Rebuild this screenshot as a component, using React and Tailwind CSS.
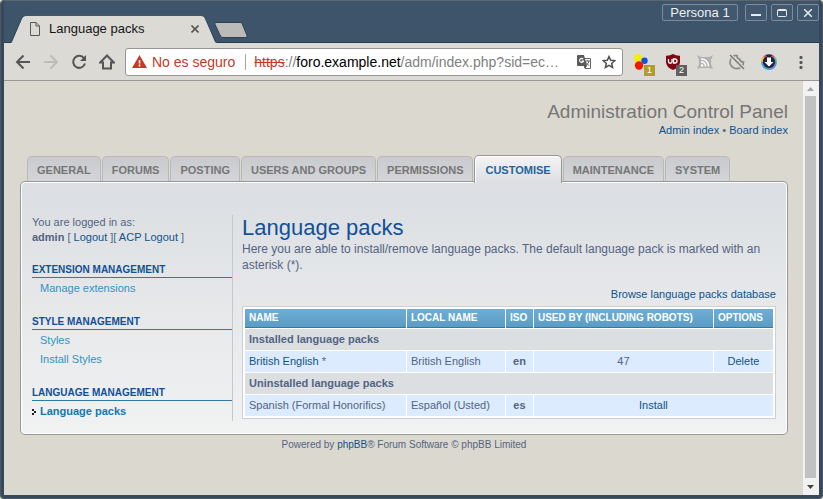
import React from "react";

const navTabs = [
  "General",
  "Forums",
  "Posting",
  "Users and groups",
  "Permissions",
  "Customise",
  "Maintenance",
  "System",
];

const menuGroups = [
  { title: "Extension management", items: ["Manage extensions"] },
  { title: "Style management", items: ["Styles", "Install Styles"] },
  { title: "Language management", items: ["Language packs"] },
];

function WindowButton({ label, children }) {
  return (
    <button
      type="button"
      aria-label={label}
      className="flex h-[17px] w-[22px] items-center justify-center rounded-[2px] border border-[#7b8c9c] bg-[#41586e]"
    >
      {children}
    </button>
  );
}

function TitleBar() {
  return (
    <div className="flex h-[43px] shrink-0 justify-between border-y border-b-[#263c50] border-t-[#5b6670] bg-[#3d546b] pl-[7px]">
      <div className="flex items-end">
        <div className="relative -mb-px flex h-7 w-[206px] items-center pl-[19px] pr-[18px]">
          <svg className="absolute inset-0 h-7 w-[206px]" viewBox="0 0 206 28" aria-hidden="true">
            <path d="M0 28 L1 27 L11 3 Q12.500 .5 15 .5 L190 .5 Q193 .5 194 3 L204 27 L206 28Z" fill="#dbdad5" />
            <path d="M0 27.500 L11 3 Q12.500 .5 15 .5 L190 .5 Q193 .5 194 3 L205 27.500" fill="none" stroke="#2c4258" strokeWidth="1" opacity=".75" />
          </svg>
          <svg className="relative h-[14px] w-[10px]" viewBox="0 0 10 14" fill="none" stroke="#5a5a5a" aria-hidden="true">
            <path d="M.5 .5h5.500l3.500 3.500v9.500H.5z M6 .5v3.500h3.500" />
          </svg>
          <span className="relative ml-[9px] grow text-[13px] leading-4 text-[#141414]">Language packs</span>
          <button type="button" aria-label="Close tab" className="relative">
            <svg className="h-2 w-2" viewBox="0 0 8 8" stroke="#555" strokeWidth="1.600">
              <path d="M.5 .5l7 7M7.500 .5l-7 7" />
            </svg>
          </button>
        </div>
        <button type="button" aria-label="New tab" className="mb-1 -ml-[3px]">
          <svg className="h-4 w-[34px]" viewBox="0 0 34 16">
            <path d="M2 .5h24q1.500 0 2 1l5 12q.5 2-1.500 2H9q-2 0-2.500-1.500L.8 2Q.5 .5 2 .5z" fill="#bdbbb7" stroke="#2c4258" />
          </svg>
        </button>
      </div>
      <div className="flex gap-1 pt-[3px]">
        <button
          type="button"
          className="mr-[3px] h-[17px] w-[76px] rounded-[2px] border border-[#7b8c9c] bg-[#41586e] text-[13px] leading-[14px] text-[#f0f0f0]"
        >
          Persona 1
        </button>
        <WindowButton label="Minimise">
          <svg className="h-2 w-[10px]" viewBox="0 0 10 8"><path d="M0 6h10" stroke="#e6ebef" strokeWidth="2" /></svg>
        </WindowButton>
        <WindowButton label="Maximise">
          <svg className="h-2 w-[10px]" viewBox="0 0 10 8" fill="none" stroke="#e6ebef">
            <rect x=".5" y=".5" width="9" height="7" rx="1" /><path d="M1 1.500h8" />
          </svg>
        </WindowButton>
        <WindowButton label="Close window">
          <svg className="h-2 w-2" viewBox="0 0 8 8" stroke="#e6ebef" strokeWidth="1.500">
            <path d="M0 0l8 8M8 0l-8 8" />
          </svg>
        </WindowButton>
      </div>
    </div>
  );
}

function NavButton({ label, color, children }) {
  return (
    <button type="button" aria-label={label} className="flex w-7 justify-center">
      <svg className="h-4 w-4" viewBox="0 0 16 16" fill="none" stroke={color} strokeWidth="2">
        {children}
      </svg>
    </button>
  );
}

function Extension({ label, badge, badgeClass, children }) {
  return (
    <button type="button" aria-label={label} className="relative flex w-8 justify-center">
      <svg className="h-4 w-4" viewBox="0 0 16 16">{children}</svg>
      {badge && (
        <span className={"absolute left-[19px] top-[11px] h-[11px] w-[11px] text-center text-[9px] leading-[11px] text-white " + badgeClass}>
          {badge}
        </span>
      )}
    </button>
  );
}

function Toolbar() {
  return (
    <div className="flex h-[38px] shrink-0 items-center border-b border-[#979692] bg-[#dbdad5] pl-[5px]">
      <NavButton label="Back" color="#555555"><path d="M15 8H2M8.500 1.500L2 8l6.500 6.500" /></NavButton>
      <NavButton label="Forward" color="#bdbcb8"><path d="M1 8h13M7.500 1.500L14 8l-6.500 6.500" /></NavButton>
      <NavButton label="Reload" color="#555555">
        <path d="M13 4.200A6 6 0 1 0 14 9.500" /><path d="M15 1v6H9z" fill="#555" stroke="none" />
      </NavButton>
      <NavButton label="Home" color="#555555"><path d="M8 1.500L1.200 8.500H4V14.500h8V8.500h2.800z" /></NavButton>

      <div className="ml-1 flex h-7 min-w-0 grow items-center rounded-[3px] border border-[#979692] bg-white pl-[6px] pr-[6px]">
        <button type="button" className="flex shrink-0 items-center whitespace-nowrap text-[14px] leading-4 text-[#c53929]">
          <svg className="mr-[5px] h-[13px] w-[15px]" viewBox="0 0 15 13" aria-hidden="true">
            <path d="M7.500 0L15 13H0z" fill="#c53929" /><path d="M7.500 5v3.500M7.500 9.500v2" stroke="#fff" strokeWidth="1.600" />
          </svg>
          No es seguro
        </button>
        <span className="ml-[10px] mr-2 h-4 w-px shrink-0 bg-[#a5a5a5]" />
        <div
          role="textbox"
          aria-label="Address"
          tabIndex={0}
          className="min-w-0 grow whitespace-nowrap text-[14px] leading-4 text-[#808080]"
        >
          <span className="text-[#c53929] line-through">https</span>://<span className="text-black">foro.example.net</span>/adm/index.php?sid=ec…
        </div>
        <button type="button" aria-label="Translate this page" className="shrink-0">
          <svg className="h-[14px] w-[14px]" viewBox="0 0 14 14">
            <path d="M5 3.500h8.500v10H8z" fill="#fff" stroke="#666" />
            <path d="M0 1q0-1 1-1h6l3 11H1q-1 0-1-1z" fill="#5a5a5a" />
            <path d="M6.200 4.200A2 2 0 1 0 6.500 6H4.500" fill="none" stroke="#fff" strokeWidth="1.100" />
            <path d="M8.500 6H13M10.800 5v1M12 6q-.5 3-3 4.500M9.200 7.500q1 2 3 3" fill="none" stroke="#666" />
            <path d="M7.500 11l2.500 0-2 2.500z" fill="#444" />
          </svg>
        </button>
        <button type="button" aria-label="Bookmark this page" className="ml-[11px] shrink-0">
          <svg className="h-[14px] w-[14px]" viewBox="0 0 14 14" fill="none" stroke="#505050" strokeWidth="1.500">
            <path d="M7 1.500L8.700 5.200 12.800 5.600 9.700 8.400 10.600 12.500 7 10.400 3.400 12.500 4.300 8.400 1.200 5.600 5.300 5.200z" />
          </svg>
        </button>
      </div>

      <div className="flex shrink-0 items-center px-[2px]">
        <Extension label="Coloured dots extension" badge="1" badgeClass="bg-[#b39b2d]">
          <circle cx="5" cy="4" r="4" fill="#f5ee00" /><circle cx="11.500" cy="6.800" r="3.200" fill="#1450dc" /><circle cx="6" cy="11.500" r="4.200" fill="#f01800" />
        </Extension>
        <Extension label="Content blocker" badge="2" badgeClass="bg-[#606060]">
          <path d="M8 0q3 2 7 1.800V8q0 5-7 8Q1 13 1 8V1.800Q5 2 8 0z" fill="#800610" />
          <path d="M3.500 5v2.500a1.500 1.500 0 0 0 3.500 0V5M8.500 5v4h1.500a2 2 0 0 0 0-4z" fill="none" stroke="#fff" strokeWidth="1.300" />
        </Extension>
        <Extension label="Feed reader">
          <path d="M0 1l4 2h8l4-2-2 5v4l2 5-4-1H4l-4 1 2-5V6z" fill="#b2b2af" />
          <circle cx="5" cy="11.500" r="1.300" fill="#fff" />
          <path d="M4 8a4 4 0 0 1 4.500 4.500M4 5a7 7 0 0 1 7.500 7.500" fill="none" stroke="#f8f8f8" strokeWidth="1.700" />
        </Extension>
        <Extension label="Blocked cookies">
          <path d="M3 3.500Q5 1 8 1.500Q8 5 10.500 5Q11 8 14.500 8Q14.500 11 12.500 13Q9 15.500 5 14Q1 12 1 8Q1 5.500 3 3.500z" fill="none" stroke="#8b8b88" strokeWidth="1.700" />
          <path d="M1 1l14 14" stroke="#dbdad5" strokeWidth="3.500" /><path d="M1 1l14 14" stroke="#777" strokeWidth="1.400" />
        </Extension>
        <Extension label="Downloads">
          <path d="M3.100 2.400A7 7 0 0 0 1 8" fill="none" stroke="#f2c03c" strokeWidth="2" />
          <path d="M1 8a7 7 0 0 0 7 7" fill="none" stroke="#39a9e8" strokeWidth="2" />
          <path d="M8 15a7 7 0 0 0 7-7" fill="none" stroke="#6c8be0" strokeWidth="2" />
          <path d="M15 8a7 7 0 0 0-2-5" fill="none" stroke="#4fd08a" strokeWidth="2" />
          <path d="M3 3a7 7 0 0 1 2-1.300M11 1.700a7 7 0 0 1 2 1.300" fill="none" stroke="#ef3f94" strokeWidth="2" />
          <circle cx="8" cy="8" r="6.200" fill="#25253a" />
          <path d="M8 1V.5M5 1.500q3-1 6 0" stroke="#25253a" strokeWidth="1.500" />
          <path d="M6 3.500h4V8h2.500L8 12.500 3.500 8H6z" fill="#fff" />
        </Extension>
        <button type="button" aria-label="Browser menu" className="flex w-8 justify-center">
          <svg className="h-4 w-4" viewBox="0 0 16 16" fill="#555">
            <rect x="6.500" y="2" width="3" height="3" rx="1" /><rect x="6.500" y="7" width="3" height="3" rx="1" /><rect x="6.500" y="12" width="3" height="3" rx="1" />
          </svg>
        </button>
      </div>
    </div>
  );
}

function AdminTabs() {
  return (
    <nav aria-label="Administration sections" className="relative flex items-end gap-px pl-[7px]">
      {navTabs.map((name) => {
        const active = name === "Customise";
        return (
          <a
            key={name}
            href="#"
            aria-current={active ? "page" : undefined}
            className={
              active
                ? "-mb-[2px] h-7 rounded-t-[5px] border border-b-0 border-[#979797] bg-linear-to-b from-[#f4f4f5] to-[#dcdee2] px-[10px] pt-[6px] text-[11px] font-bold uppercase leading-4 text-[#23649f] shadow-[inset_1px_1px_0_#ffffff]"
                : "h-[25px] rounded-t-[5px] border border-b-0 border-[#b9b9b7] bg-linear-to-b from-[#c9cace] to-[#d4d5d9] px-[9px] pt-[5px] text-[11px] font-bold uppercase leading-4 text-[#767676]"
            }
          >
            {name}
          </a>
        );
      })}
    </nav>
  );
}

function Sidebar() {
  return (
    <aside className="w-[201px] shrink-0 border-r border-[#c4c9cd] text-[11px]">
      <p className="leading-[15px] text-[#536482]">
        You are logged in as:
        <br />
        <strong>admin</strong> [ <a href="#" className="text-[#105289]">Logout</a> ][ <a href="#" className="text-[#105289]">ACP Logout</a> ]
      </p>
      <div className="flex flex-col gap-4 pt-[17px]">
        {menuGroups.map((group) => (
          <section key={group.title}>
            <h2 className="h-4 border-b border-[#327aa5] text-[10px] font-bold uppercase leading-4 text-[#115098]">
              {group.title}
            </h2>
            <ul className="pt-px">
              {group.items.map((item) =>
                item === "Language packs" ? (
                  <li key={item} className="flex items-center">
                    <svg className="mr-1 h-[6px] w-1" viewBox="0 0 4 6" fill="#222" shapeRendering="crispEdges" aria-hidden="true">
                      <path d="M0 0h2v2H0zM2 2h2v2H2zM0 4h2v2H0z" />
                    </svg>
                    <a href="#" className="font-bold leading-[19px] text-[#1278af]">{item}</a>
                  </li>
                ) : (
                  <li key={item} className="pl-2">
                    <a href="#" className="leading-[19px] text-[#3293c4]">{item}</a>
                  </li>
                )
              )}
            </ul>
          </section>
        ))}
      </div>
    </aside>
  );
}

const headCell = "h-[19px] border-b border-[#327aa5] bg-linear-to-b from-[#70add3] to-[#5a9cc6] px-1 text-left text-[10px] font-bold uppercase leading-[18px] text-white";
const groupCell = "h-[21px] bg-[#dbdfe2] px-1 text-left font-bold";
const bodyCell = "h-[21px] bg-[#dcebfe] px-1";

function PacksTable() {
  return (
    <table className="w-full table-fixed border-separate border-spacing-px border border-[#cccfd3] bg-white p-px text-[11px] leading-[15px] text-[#536482]">
      <colgroup>
        <col />
        <col className="w-[98px]" />
        <col className="w-[27px]" />
        <col className="w-[179px]" />
        <col className="w-[59px]" />
      </colgroup>
      <thead>
        <tr>
          <th className={headCell}>Name</th>
          <th className={headCell}>Local name</th>
          <th className={headCell}>ISO</th>
          <th className={headCell}>Used by (including robots)</th>
          <th className={headCell}>Options</th>
        </tr>
      </thead>
      <tbody>
        <tr>
          <th colSpan={5} className={groupCell}>Installed language packs</th>
        </tr>
        <tr>
          <td className={bodyCell}><a href="#" className="text-[#105289]">British English</a> *</td>
          <td className={bodyCell}>British English</td>
          <td className={bodyCell + " text-center font-bold"}>en</td>
          <td className={bodyCell + " text-center"}>47</td>
          <td className={bodyCell + " text-center"}><a href="#" className="text-[#105289]">Delete</a></td>
        </tr>
        <tr>
          <th colSpan={5} className={groupCell}>Uninstalled language packs</th>
        </tr>
        <tr>
          <td className={bodyCell}>Spanish (Formal Honorifics)</td>
          <td className={bodyCell}>Español (Usted)</td>
          <td className={bodyCell + " text-center font-bold"}>es</td>
          <td colSpan={2} className={bodyCell + " text-center"}><a href="#" className="text-[#105289]">Install</a></td>
        </tr>
      </tbody>
    </table>
  );
}

function AdminPage() {
  return (
    <div className="min-w-0 grow overflow-hidden bg-[#dbd8d0] pl-4 pr-[15px] pt-5">
      <header className="text-right">
        <h1 className="text-[19px] leading-[22px] text-[#767676]">Administration Control Panel</h1>
        <p className="text-[11px] leading-[14px] text-[#536482]">
          <a href="#" className="text-[#105289]">Admin index</a> • <a href="#" className="text-[#105289]">Board index</a>
        </p>
      </header>
      <div className="pt-[18px]">
        <AdminTabs />
        <div className="rounded-[5px] border border-[#979797] bg-linear-to-b from-[#dbdee2] to-[#f1f2f2] px-[11px] pb-[13px] pt-[33px] shadow-[inset_0_0_0_1px_#ffffff]">
          <div className="flex gap-[9px]">
            <Sidebar />
            <main className="min-w-0 grow">
              <h2 className="text-[22px] leading-[26px] text-[#115098]">Language packs</h2>
              <p className="text-[12px] leading-4 text-[#536482]">
                Here you are able to install/remove language packs. The default language pack is marked with an asterisk (*).
              </p>
              <p className="pb-1 pt-[14px] text-right text-[11px] leading-[15px]">
                <a href="#" className="text-[#105289]">Browse language packs database</a>
              </p>
              <PacksTable />
            </main>
          </div>
        </div>
      </div>
      <footer className="pt-1 text-center text-[10px] leading-3 text-[#536482]">
        Powered by <a href="#" className="text-[#105289]">phpBB</a>® Forum Software © phpBB Limited
      </footer>
    </div>
  );
}

function ScrollBar() {
  return (
    <div className="flex w-4 shrink-0 flex-col items-center bg-[#f1f1f1]">
      <button type="button" aria-label="Scroll up" className="flex h-[15px] items-center">
        <svg className="h-1 w-[7px]" viewBox="0 0 7 4"><path d="M3.500 0L7 4H0z" fill="#a3a3a3" /></svg>
      </button>
      <div className="w-[11px] grow bg-[#c1c1c1]" />
      <button type="button" aria-label="Scroll down" className="flex h-[17px] items-center">
        <svg className="h-1 w-[7px]" viewBox="0 0 7 4"><path d="M0 0h7L3.500 4z" fill="#444" /></svg>
      </button>
    </div>
  );
}

export default function App() {
  return (
    <div className="h-screen bg-[#dfe8cf] font-['Liberation_Sans',Arial,sans-serif]">
      <div className="h-full overflow-hidden rounded-[4px] border border-t-0 border-[#50575e] bg-[#34495e]">
        <div className="flex h-full flex-col border-3 border-t-0 border-[#34495e] bg-[#dbd8d0]">
          <TitleBar />
          <Toolbar />
          <div className="flex min-h-0 grow">
            <AdminPage />
            <ScrollBar />
          </div>
        </div>
      </div>
    </div>
  );
}
